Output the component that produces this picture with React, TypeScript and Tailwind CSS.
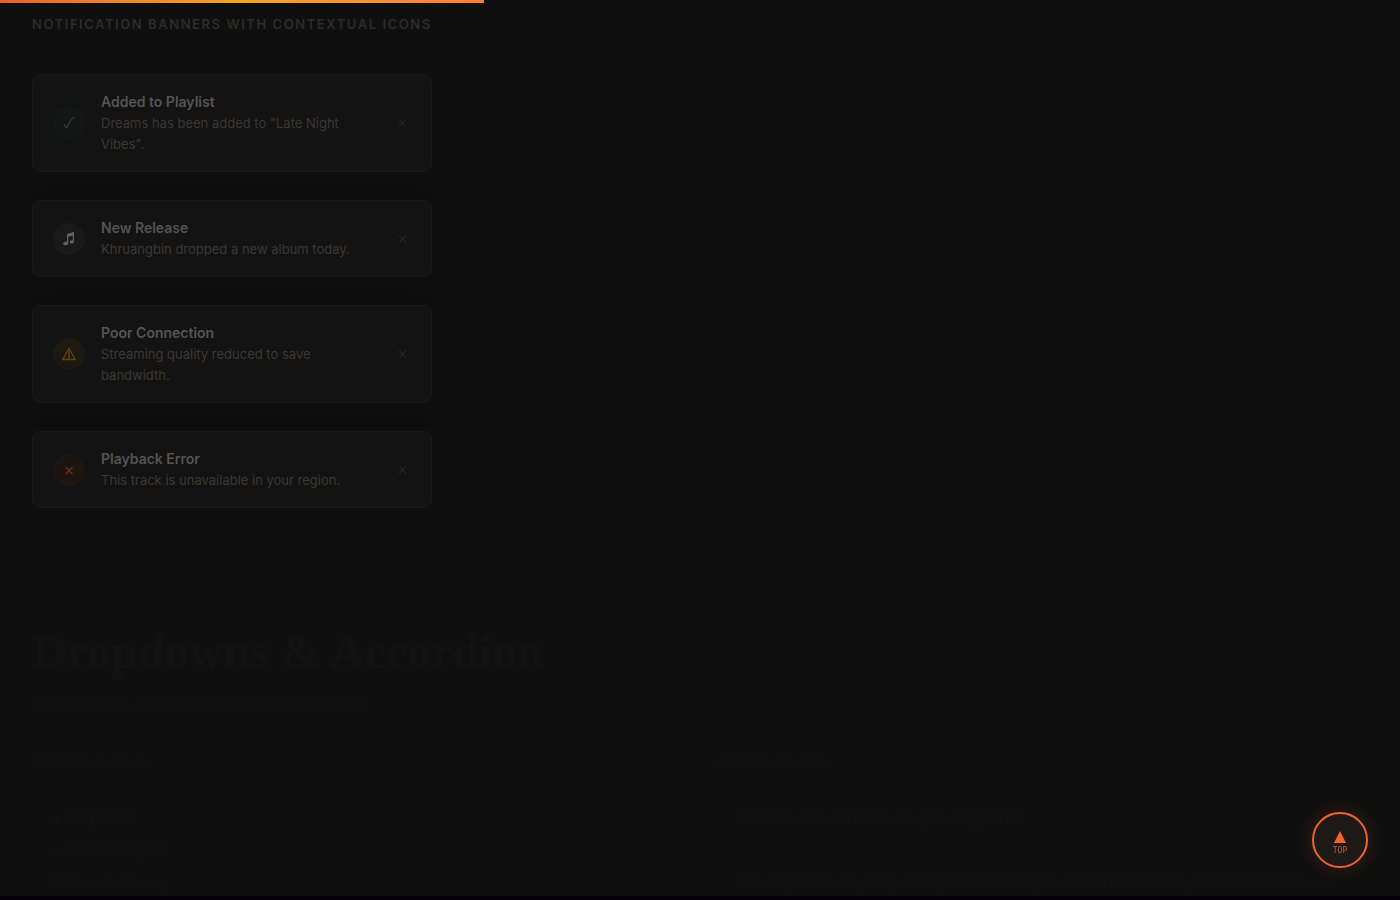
type Tone = "success" | "info" | "warning" | "error";

interface Notice {
  tone: Tone;
  title: string;
  message: string;
}

const notices: Notice[] = [
  { tone: "success", title: "Added to Playlist", message: 'Dreams has been added to "Late Night Vibes".' },
  { tone: "info", title: "New Release", message: "Khruangbin dropped a new album today." },
  { tone: "warning", title: "Poor Connection", message: "Streaming quality reduced to save bandwidth." },
  { tone: "error", title: "Playback Error", message: "This track is unavailable in your region." },
];

const toneClass: Record<Tone, string> = {
  success: "bg-[#131716] text-[#1d4238]",
  info: "bg-[#191919] text-[#63615f]",
  warning: "bg-[#1e1810] text-[#624211]",
  error: "bg-[#1e1510] text-[#66301b]",
};

const ToneIcon: React.FC<{ tone: Tone }> = ({ tone }) => {
  if (tone === "success") {
    return (
      <svg className="size-4" viewBox="0 0 16 16" fill="none" stroke="currentColor" aria-hidden="true">
        <path d="M3 9.2 5.8 13.2" strokeWidth="1.6" />
        <path d="M5.6 13.4C7 9.5 9.5 5 13 2" strokeWidth="1.2" />
      </svg>
    );
  }
  if (tone === "info") {
    return (
      <svg className="size-4" viewBox="0 0 16 16" fill="currentColor" aria-hidden="true">
        <path d="M6 3.3 13 1v10.2h-1.3V4.6L7.3 6v6.5H6z" />
        <path d="M6 3.3 13 1v2.5L6 5.8z" />
        <ellipse cx="4.7" cy="12.4" rx="2.5" ry="1.9" />
        <ellipse cx="10.8" cy="10.9" rx="2.2" ry="1.7" />
      </svg>
    );
  }
  if (tone === "warning") {
    return (
      <svg className="size-4" viewBox="0 0 16 16" fill="none" stroke="currentColor" aria-hidden="true">
        <path d="M8 2.2 14.2 13.5H1.8z" strokeWidth="1.3" />
        <path d="M8 5v8" strokeWidth="1.5" />
      </svg>
    );
  }
  return (
    <svg className="size-4" viewBox="0 0 16 16" fill="none" stroke="currentColor" aria-hidden="true">
      <path d="m4.7 5.2 6.8 6.8M11.5 5.2l-6.8 6.8" strokeWidth="1.4" />
    </svg>
  );
};

const Banner: React.FC<{ notice: Notice }> = ({ notice }) => {
  return (
    <li className="flex items-center gap-4 rounded-lg border border-[#191919] bg-[#131313] px-5 py-4 shadow-[0_8px_24px_rgba(0,0,0,0.12)]">
      <span className={`flex size-8 shrink-0 items-center justify-center rounded-full ${toneClass[notice.tone]}`}>
        <ToneIcon tone={notice.tone} />
      </span>
      <div className="flex-1">
        <h4 className="text-sm leading-[22px] font-semibold text-[#565452]">{notice.title}</h4>
        <p className="text-[13px] leading-[21px] text-[#3b3833]">{notice.message}</p>
      </div>
      <button type="button" aria-label="Dismiss" className="flex size-4 items-center justify-center text-[#302d2a]">
        <svg className="size-3" viewBox="0 0 12 12" fill="none" stroke="currentColor">
          <path d="m2 2.5 7 7M9 2.5l-7 7" />
        </svg>
      </button>
    </li>
  );
};

const menuItems = [
  { icon: "▸", label: "Play Next" },
  { icon: "+", label: "Add to Playlist" },
  { icon: "♡", label: "Save to Library" },
];

export default function App() {
  return (
    <div className="relative h-screen overflow-hidden border-b-4 border-[#050108] bg-[#0f0f0f] font-['Inter',sans-serif]">
      <div className="fixed top-0 left-0 h-[3px] w-[484px] bg-linear-to-r from-[#e8612c] via-[#f5a623] to-[#ff7a3d]" />

      <section className="px-8 pt-3">
        <h3 className="text-[13px] leading-6 font-semibold tracking-[0.12em] text-[#2d2a27] uppercase">
          Notification banners with contextual icons
        </h3>
        <ul className="mt-[38px] flex max-w-[400px] flex-col gap-7">
          {notices.map((n) => (
            <Banner key={n.title} notice={n} />
          ))}
        </ul>
      </section>

      <section className="px-8 pt-28">
        <h2 className="font-['Liberation_Serif',serif] text-5xl leading-[64px] font-bold text-[#141211]">
          Dropdowns &amp; Accordion
        </h2>
        <p className="mt-2 text-[13px] leading-6 tracking-widest text-[#121213] uppercase">
          Contextual menus and collapsible FAQ
        </p>
        <div className="mt-9 grid grid-cols-2 gap-8">
          <div>
            <h3 className="text-xs leading-6 font-semibold tracking-wide text-[#12110f] uppercase">Dropdown Menu</h3>
            <ul className="mt-6 px-5 text-sm text-[#121212]">
              {menuItems.map((item) => (
                <li key={item.label}>
                  <button type="button" className="flex h-[33px] items-center gap-1 font-medium">
                    <span className="w-3">{item.icon}</span>
                    {item.label}
                  </button>
                </li>
              ))}
            </ul>
          </div>
          <div>
            <h3 className="text-xs leading-6 font-semibold tracking-wide text-[#12110f] uppercase">Accordion / FAQ</h3>
            <div className="mt-[30px] px-6">
              <button type="button" className="block text-base leading-6 font-medium text-[#13110f]">
                What audio formats do you support?
              </button>
              <p className="mt-10 text-sm leading-6 text-[#121212]">
                We support FLAC, WAV, ALAC, and AAC at up to 24-bit/192kHz. Vinyl Purr Pro subscribers
              </p>
            </div>
          </div>
        </div>
      </section>

      <a
        href="#top"
        className="fixed right-8 bottom-8 flex size-14 flex-col items-center justify-center rounded-full border-2 border-[#f0642f] bg-[#1d1a18] pt-1.5 text-[#f0642f] shadow-[0_0_20px_rgba(240,100,47,0.2)]"
      >
        <svg className="size-3" viewBox="0 0 12 12" fill="currentColor" aria-hidden="true">
          <path d="M6 0 12 12H0z" />
        </svg>
        <span className="mt-1 font-['DejaVu_Sans_Mono',monospace] text-[8px] leading-2 text-[#d05a2c]">TOP</span>
      </a>
    </div>
  );
}
